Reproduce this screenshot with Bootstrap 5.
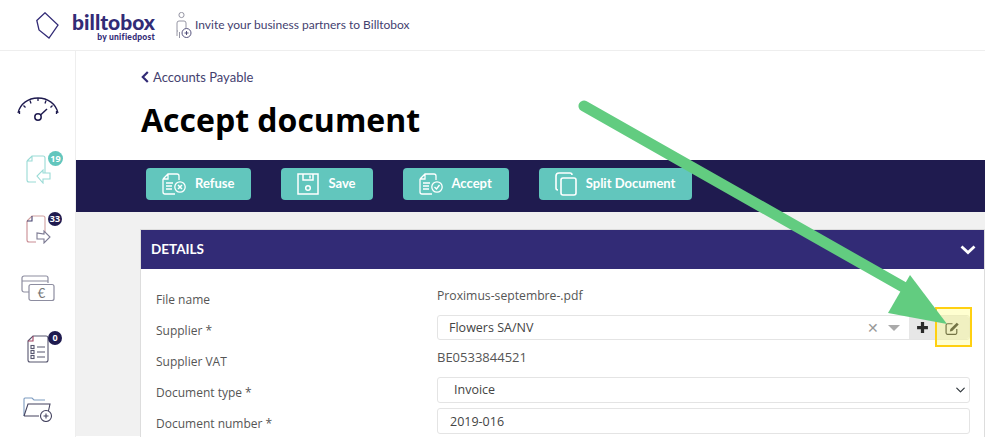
<!DOCTYPE html>
<html lang="en"><head><meta charset="utf-8"><title>Accept document</title>
<link href="https://cdn.jsdelivr.net/npm/bootstrap@5.3.0/dist/css/bootstrap.min.css" rel="stylesheet">
<style>
html,body{height:437px;overflow:hidden;background:#fff}
body{font-family:"Open Sans",sans-serif;color:#555;position:relative}
.top-bar{height:51px;border-bottom:1px solid #eee;padding-left:36px}
.brand-mark{width:23px;height:27px;margin-right:11px}
.brand-text{width:85px;color:#322b76;font-family:Lato,sans-serif;font-weight:900;text-align:right;line-height:1;padding-top:2px}
.brand-name{font-size:21px;display:block}
.brand-sub{font-size:8.5px;letter-spacing:.25px;display:block;margin-top:1px}
.invite{font-family:Lato,sans-serif;font-size:12px;color:#44416f;margin-left:21px}
.invite svg{margin-right:3px}
.shell{height:386px}
.side-rail{width:76px;flex:none;border-right:1px solid #eee;padding-top:28px}
.rail-item{height:60px;position:relative}
.rail-badge{position:absolute;left:48px;top:13px;width:14px;height:14px;border-radius:50%;background:#1f1b4f;color:#fff;font:700 9px/14px "Open Sans",sans-serif;text-align:center}
.rail-badge-teal{background:#62c6bd;top:12px;width:15px;height:15px;line-height:15px}
.rail-badge-low{top:12px}
.content{min-width:0;position:relative}
.back-link{font-family:Lato,sans-serif;font-size:13px;color:#44416f;padding:18px 0 0 65px;line-height:17px}
.back-link svg{margin-right:4px;vertical-align:-1px}
.page-title{font-family:"Open Sans",sans-serif;font-weight:700;color:#000;font-size:32px;line-height:44px;margin:12px 0 18px 65px}
.action-band{background:#1f1b4f;height:52px;padding:8px 0 0 70px;gap:30px}
.act-btn{height:32px;background:#62c6bd;border:0;border-radius:4px;color:#fff;font-family:Lato,sans-serif;font-weight:700;font-size:13px;padding:0 17px 0 16px;gap:9px;white-space:nowrap}
.gray-zone{background:#f1f1f1;height:224px;padding:17px 0 0 64px}
.detail-card{background:#fff;border:1px solid #ddd;border-bottom:0;height:210px;border-radius:0}
.detail-head{background:#322b76;color:#fff;height:39px;margin:0;padding:0 8px 0 10px;font:700 13.500px/39px Lato,sans-serif}
.detail-body{padding:15px 14px 0 15px}
.form-line{height:31px;font-size:12.2px}
.form-key{width:281px;flex:none;padding-top:7px;line-height:17px;color:#555;font-size:12px}
.form-val{flex:1;min-width:0;line-height:17px;color:#555}
.form-val.plain{padding-top:3px}
.vat-val{font-size:13px}
.field{height:26px;border:1px solid #e4e4e4;border-radius:3px;background-color:#fff;font-size:12.5px;color:#444;padding:0 12px;line-height:24px;box-shadow:none}
.field.form-select{padding:0 12px 0 16px;background-position:right 2px center;background-size:13px 10px}
.picker{height:25px;border:1px solid #e4e4e4;border-radius:3px;background:#fff;font-size:12.5px;color:#444}
.picker-text{padding-left:11px;line-height:23px}
.picker-x{color:#999;font-size:14px;margin-right:9px;line-height:23px}
.picker-caret{width:0;height:0;border:6px solid transparent;border-top:6px solid #aaa;border-bottom:0;margin-right:9px}
.pick-btn{width:27px;height:23px;background:#e7e7e7;border:0}
.pick-btn-soft{width:33px;background:#e8e8e8;border-radius:0 3px 3px 0}
.callout{position:absolute;left:935px;top:307px;width:37px;height:40px;border:2px solid #ffd011;background:rgba(255,255,120,.35);pointer-events:none}
.pointer{position:absolute;left:570px;top:92px;pointer-events:none}
</style></head>
<body>
<header class="top-bar d-flex align-items-center">
  <svg class="brand-mark" viewBox="0 0 23 27" fill="none" stroke="#322b76" stroke-width="1.300"><path d="M.8 8.500 9 .8 22 13l-9 13-10-8z"/></svg>
  <div class="brand-text"><span class="brand-name">billtobox</span><span class="brand-sub">by unifiedpost</span></div>
  <div class="invite d-flex align-items-center">
    <svg width="16" height="27" viewBox="0 0 16 27" fill="none" stroke="#8a8a9a" stroke-width=".9"><circle cx="5.500" cy="3" r="2.600"/><path d="M1 24V11a2 2 0 0 1 2-2h5a2 2 0 0 1 2 2v5M1 19h1M3.500 26V20"/><circle cx="10.500" cy="21" r="4.500" stroke="#44416f"/><path d="M8.500 21h4M10.500 19v4" stroke="#44416f"/></svg>
    <span>Invite your business partners to Billtobox</span>
  </div>
</header>
<div class="shell d-flex">
  <nav class="side-rail">
    <div class="rail-item d-flex align-items-center justify-content-center">
      <svg width="42" height="26" viewBox="0 0 42 26" fill="none" stroke="#1f1b4f" stroke-width="1.300"><path d="M1 17C3 8 11 2 21 2s18 6 20 15"/><path d="M2.500 18v-3M6.500 9.500l2 2M13 4.500l1 3M21 2v3M29 4.500l-1 3M35.500 9.500l-2 2M39.500 18v-3"/><circle cx="21" cy="21" r="3.200" stroke-width="1.500"/><path d="m23.500 19 6.500-6" stroke-width="1.500"/></svg>
    </div>
    <div class="rail-item d-flex align-items-center justify-content-center">
      <svg width="26" height="30" viewBox="0 0 26 30" fill="none" stroke="#9adbd6" stroke-width="1.100"><path d="M2 7 7 2h11a2 2 0 0 1 2 2v15M2 7v19a2 2 0 0 0 2 2h7M2 7h5V2"/><path d="M25 19v6h-7v4l-6-7 6-6v3z" fill="#fff"/></svg>
      <span class="rail-badge rail-badge-teal">19</span>
    </div>
    <div class="rail-item d-flex align-items-center justify-content-center">
      <svg width="26" height="30" viewBox="0 0 26 30" fill="none" stroke="#7c7a93" stroke-width="1.100"><path d="M2 7 7 2h11a2 2 0 0 1 2 2v15" stroke="#d0a0a0"/><path d="M2 7v19a2 2 0 0 0 2 2h7" stroke="#c98c93"/><path d="M2 7h5V2" stroke="#44416f"/><path d="M12 19v6h7v4l6-6-6-6v3z" fill="#fff"/></svg>
      <span class="rail-badge">33</span>
    </div>
    <div class="rail-item d-flex align-items-center justify-content-center">
      <svg width="34" height="28" viewBox="0 0 34 28" fill="none" stroke="#8d8da0" stroke-width="1.200"><path d="M8 17H3a2 2 0 0 1-2-2V3a2 2 0 0 1 2-2h22a2 2 0 0 1 2 2v5M1 6h26" /><rect x="8" y="9.500" width="25" height="16" rx="2" fill="#fff"/><text x="20.500" y="22.500" text-anchor="middle" font-family="Lato,sans-serif" font-size="13" fill="#777" stroke="none">€</text></svg>
    </div>
    <div class="rail-item d-flex align-items-center justify-content-center">
      <svg width="22" height="28" viewBox="0 0 22 28" fill="none" stroke="#57566f" stroke-width="1.100"><path d="M1 6 6 1h13a2 2 0 0 1 2 2v22a2 2 0 0 1-2 2H3a2 2 0 0 1-2-2z"/><path d="M1 6h5V1" stroke="#a04060"/><path d="M10 12h8M10 17h8M10 22h8"/><rect x="4" y="10.500" width="3" height="3"/><rect x="4" y="15.500" width="3" height="3"/><rect x="4" y="20.500" width="3" height="3"/></svg>
      <span class="rail-badge rail-badge-low">0</span>
    </div>
    <div class="rail-item d-flex align-items-center justify-content-center">
      <svg width="30" height="26" viewBox="0 0 30 26" fill="none" stroke="#44435f" stroke-width="1.100"><path d="M1 20V3a1 1 0 0 1 1-1h7l2 2h11" stroke="#7c9bc0"/><path d="M1 20 5 8h22l-2 9M1 20h15"/><circle cx="23" cy="20" r="5.500" fill="#fff"/><path d="M20.500 20h5M23 17.500v5"/></svg>
    </div>
  </nav>
  <main class="content flex-grow-1">
    <div class="back-link"><svg width="8" height="12" viewBox="0 0 8 12" fill="none" stroke="#322b76" stroke-width="2.200"><path d="M6.800 1 1.800 6l5 5"/></svg>Accounts Payable</div>
    <h1 class="page-title">Accept document</h1>
    <div class="action-band d-flex align-items-start">
      <button class="act-btn d-flex align-items-center"><svg width="24" height="22" viewBox="0 0 24 22" fill="none" stroke="#fff" stroke-width="1.300"><path d="M1 6 6 1h9a2 2 0 0 1 2 2v4M1 6v13a2 2 0 0 0 2 2h10M1 6h5V1M4 10h7M4 13h6M4 16h6"/><circle cx="18" cy="14" r="5.200"/><path d="m16 12 4 4M20 12l-4 4" stroke-width="1.500"/></svg>Refuse</button>
      <button class="act-btn d-flex align-items-center"><svg width="22" height="22" viewBox="0 0 22 22" fill="none" stroke="#fff" stroke-width="1.500"><path d="M1 1h20v20H1z"/><path d="M6 1v6h10V1M13 2.500v3"/><circle cx="11" cy="15" r="2.300"/></svg>Save</button>
      <button class="act-btn d-flex align-items-center"><svg width="24" height="22" viewBox="0 0 24 22" fill="none" stroke="#fff" stroke-width="1.300"><path d="M1 6 6 1h9a2 2 0 0 1 2 2v4M1 6v13a2 2 0 0 0 2 2h10M1 6h5V1M4 10h7M4 13h6M4 16h6"/><circle cx="18" cy="14" r="5.200"/><path d="m15.500 14 2 2 3-4" stroke-width="1.400"/></svg>Accept</button>
      <button class="act-btn d-flex align-items-center"><svg width="22" height="24" viewBox="0 0 22 24" fill="none" stroke="#fff" stroke-width="1.600"><path d="M3 18a2 2 0 0 1-2-2V4a3 3 0 0 1 3-3h11a2 2 0 0 1 2 2"/><rect x="6" y="6" width="15" height="17" rx="2"/></svg>Split Document</button>
    </div>
    <div class="gray-zone">
      <section class="detail-card">
        <h2 class="detail-head d-flex justify-content-between align-items-center">DETAILS<svg width="16" height="10" viewBox="0 0 16 10" fill="none" stroke="#fff" stroke-width="2.800"><path d="m1.500 1.500 6.500 6 6.500-6"/></svg></h2>
        <div class="detail-body">
          <div class="form-line d-flex"><div class="form-key">File name</div><div class="form-val plain">Proximus-septembre-.pdf</div></div>
          <div class="form-line d-flex"><div class="form-key">Supplier *</div><div class="form-val">
            <div class="picker d-flex align-items-center"><span class="picker-text flex-grow-1">Flowers SA/NV</span><span class="picker-x">✕</span><span class="picker-caret"></span>
              <button class="pick-btn p-0 d-flex align-items-center justify-content-center" aria-label="Add"><svg width="13" height="13" viewBox="0 0 12 12" fill="#2a2a2a"><path d="M4.500 1h3v3.500H11v3H7.500V11h-3V7.500H1v-3h3.500z"/></svg></button>
              <button class="pick-btn pick-btn-soft p-0 d-flex align-items-center justify-content-center" aria-label="Edit"><svg width="15" height="14" viewBox="0 0 14 13" fill="none" stroke="#2a2a2a" stroke-width="1.100"><path d="M11 7.500V11a1.500 1.500 0 0 1-1.500 1.500h-7A1.500 1.500 0 0 1 1 11V4a1.500 1.500 0 0 1 1.500-1.500H7"/><path d="M5 7.500 11 1.500l1.800 1.800-6 6-2.300.5z" fill="#2a2a2a" stroke="none"/></svg></button>
            </div></div></div>
          <div class="form-line d-flex"><div class="form-key">Supplier VAT</div><div class="form-val plain vat-val">BE0533844521</div></div>
          <div class="form-line d-flex"><div class="form-key">Document type *</div><div class="form-val"><select class="form-select field" aria-label="Document type"><option>Invoice</option></select></div></div>
          <div class="form-line d-flex"><div class="form-key">Document number *</div><div class="form-val"><input class="form-control field" value="2019-016" aria-label="Document number"></div></div>
        </div>
      </section>
    </div>
  </main>
</div>
<div class="callout"></div>
<svg class="pointer" width="400" height="260" viewBox="570 92 400 260"><path d="M584 106 905 288" stroke="#62cc80" stroke-width="11" stroke-linecap="round" fill="none"/><path d="M910 275 947 324 888 313z" fill="#62cc80"/></svg>
</body></html>
